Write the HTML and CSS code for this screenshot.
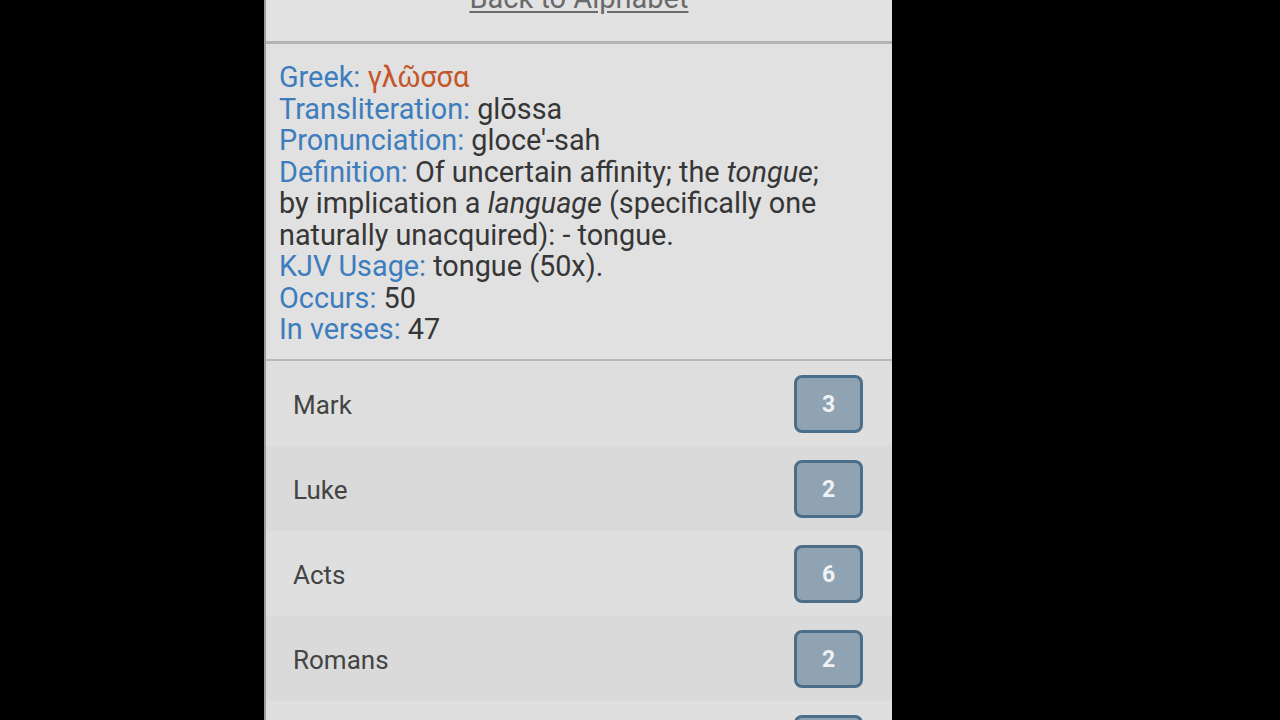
FILE: index.html
```html
<!DOCTYPE html>
<html lang="en">
<head>
<meta charset="utf-8">
<title>γλῶσσα</title>
<link rel="stylesheet" href="styles.css">
</head>
<body>
<div class="panel">
  <header class="top">
    <a class="back" href="#">Back to Alphabet</a>
  </header>
  <section class="detail">
    <div><span class="lbl">Greek:</span> <span class="greek">γλῶσσα</span></div>
    <div><span class="lbl">Transliteration:</span> glōssa</div>
    <div><span class="lbl">Pronunciation:</span> gloce'-sah</div>
    <div><span class="lbl">Definition:</span> Of uncertain affinity; the <i>tongue</i>; by implication a <i>language</i> (specifically one naturally unacquired): - tongue.</div>
    <div><span class="lbl">KJV Usage:</span> tongue (50x).</div>
    <div><span class="lbl">Occurs:</span> 50</div>
    <div><span class="lbl">In verses:</span> 47</div>
  </section>
  <ul class="books">
    <li class="row"><span class="name">Mark</span><span class="badge">3</span></li>
    <li class="row"><span class="name">Luke</span><span class="badge">2</span></li>
    <li class="row"><span class="name">Acts</span><span class="badge">6</span></li>
    <li class="row"><span class="name">Romans</span><span class="badge">2</span></li>
    <li class="row"><span class="name">1 Corinthians</span><span class="badge">21</span></li>
  </ul>
</div>
</body>
</html>
```
FILE: styles.css
```css
html, body {
  margin: 0;
  padding: 0;
  background: #000;
  height: 720px;
  overflow: hidden;
}
.panel {
  width: 626px;
  margin-left: 264px;
  border-left: 2px solid #9c9c9c;
  background: #e0e0e0;
  height: 720px;
  overflow: hidden;
  font-family: Roboto, "Liberation Sans", sans-serif;
}
.top {
  height: 41px;
  border-bottom: 3px solid #b4b4b4;
  background: #e2e2e2;
  display: flex;
  justify-content: center;
  overflow: hidden;
}
.back {
  display: block;
  margin-top: -16px;
  font-size: 29px;
  line-height: 28px;
  color: #6a6a6a;
  text-decoration: underline;
  text-underline-offset: 3px;
}
.detail {
  padding: 18px 60px 13px 13px;
  font-size: 28.8px;
  line-height: 31.5px;
  color: #363636;
  border-bottom: 2px solid #b8b8b8;
  background: #e1e1e1;
}
.lbl {
  color: #3d7dbd;
}
.greek {
  color: #c4562a;
}
.books {
  list-style: none;
  margin: 0;
  padding: 0;
}
.row {
  height: 85px;
  display: flex;
  align-items: center;
  justify-content: space-between;
  padding: 0 29px 0 27px;
  background: #dfdfdf;
}
.row:nth-child(even) {
  background: #dadada;
}
.name {
  font-size: 26px;
  color: #444;
  padding-top: 3px;
}
.badge {
  box-sizing: border-box;
  width: 69px;
  height: 58px;
  margin-top: 2px;
  border: 3px solid #4b6e8b;
  border-radius: 8px;
  background: #8fa3b2;
  color: #eef2f5;
  font-weight: bold;
  font-size: 23px;
  display: flex;
  align-items: center;
  justify-content: center;
}
```
